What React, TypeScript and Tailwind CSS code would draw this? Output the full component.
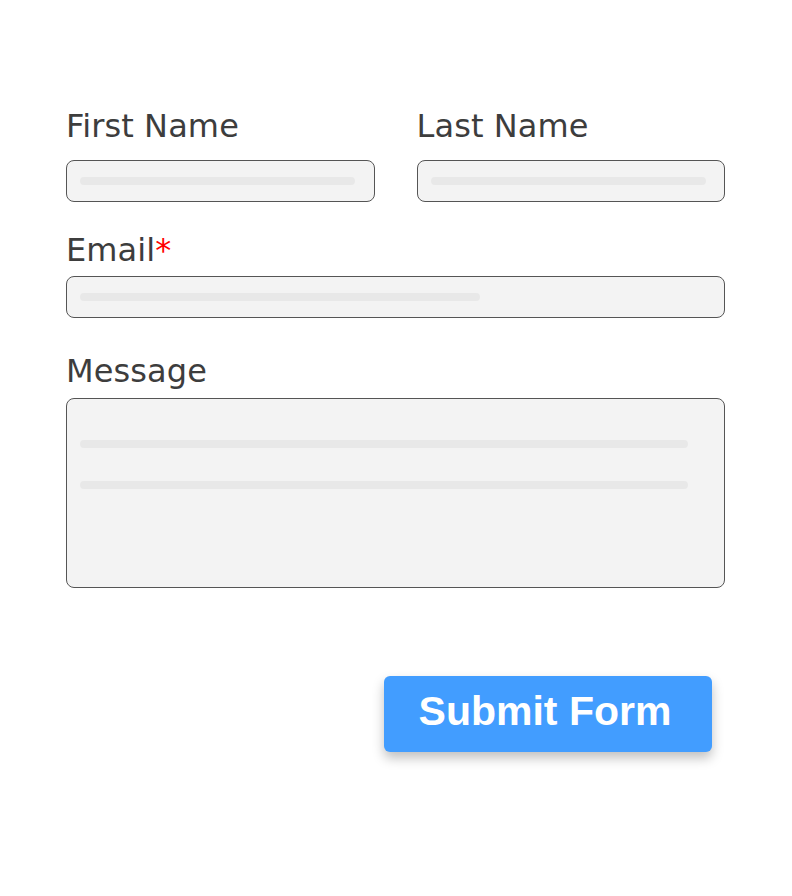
export default function App() {
  const label = 'text-[32px] leading-[38px] text-[#3d3d3d] font-["DejaVu_Sans",sans-serif] tracking-[0.1px]'
  const box = 'border border-[#555] bg-[#f3f3f3] rounded-[8px]'
  const bar = 'h-[8px] rounded-full bg-[#e8e8e8]'

  return (
    <div className="w-[792px] h-[896px] bg-white">
      <div className="pl-[66px] pt-[107px] w-[725px] flex flex-col">
        <div className="flex gap-[42px]">
          <div className="flex-1 flex flex-col">
            <label className={label}>First Name</label>
            <div className={`${box} h-[42px] mt-[15px] px-[13px] flex items-center`}>
              <div className={`${bar} w-[275px]`} />
            </div>
          </div>
          <div className="flex-1 flex flex-col">
            <label className={label}>Last Name</label>
            <div className={`${box} h-[42px] mt-[15px] px-[13px] flex items-center`}>
              <div className={`${bar} w-[275px]`} />
            </div>
          </div>
        </div>

        <label className={`${label} mt-[29px]`}>
          Email<span className="text-[#ff0000]">*</span>
        </label>
        <div className={`${box} h-[42px] mt-[7px] px-[13px] flex items-center`}>
          <div className={`${bar} w-[400px]`} />
        </div>

        <label className={`${label} mt-[34px]`}>Message</label>
        <div className={`${box} h-[190px] mt-[8px] px-[13px] pt-[41px] flex flex-col gap-[33px]`}>
          <div className={`${bar} w-[608px]`} />
          <div className={`${bar} w-[608px]`} />
        </div>

        <div className="flex justify-end pr-[13px] mt-[88px]">
          <button className="w-[328px] h-[76px] pb-[4px] pr-[6px] rounded-[6px] bg-[#429dff] text-white text-[41px] font-bold font-['Liberation_Sans',Arial,sans-serif] shadow-[0_6px_12px_rgba(0,0,0,0.25)]">
            Submit Form
          </button>
        </div>
      </div>
    </div>
  )
}
